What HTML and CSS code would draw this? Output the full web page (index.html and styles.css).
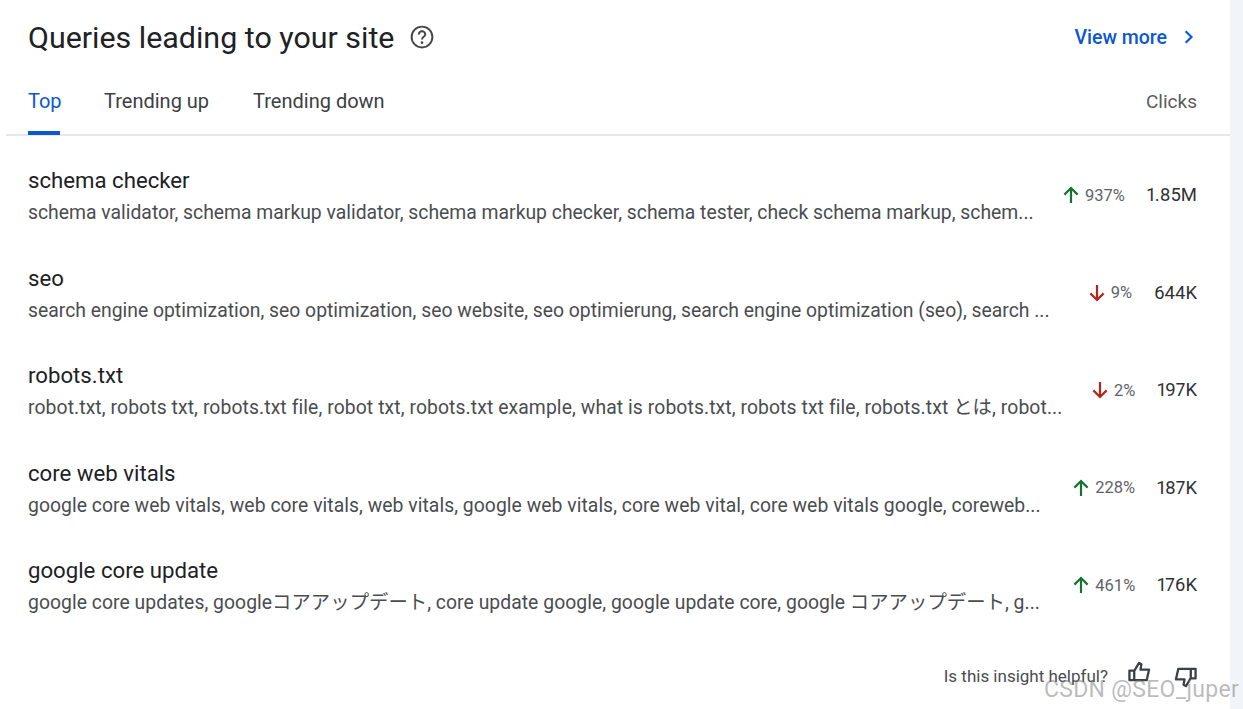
FILE: index.html
```html
<!DOCTYPE html>
<html lang="en">
<head>
  <meta charset="UTF-8" />
  <meta name="viewport" content="width=device-width, initial-scale=1.0"/>
  <title>Queries leading to your site</title>
  <link rel="stylesheet" href="styles.css">
</head>
<body>

<div class="card">
  <div class="card-head">
    <h1>Queries leading to your site</h1>
    <svg class="help" viewBox="0 0 24 24"><circle cx="12" cy="12" r="9.6"/><path d="M9 9.6a3 3 0 0 1 6 0c0 2.100-3 2.400-3 4.600"/><circle class="dot" cx="12" cy="17.200" r="1.200"/></svg>
    <a class="more" href="#">View more
      <svg viewBox="0 0 24 24"><path d="M10.400 5 17.400 12l-7 7"/></svg>
    </a>
  </div>

  <div class="tabs">
    <div class="tab active">Top</div>
    <div class="tab">Trending up</div>
    <div class="tab">Trending down</div>
    <div class="tabs-label">Clicks</div>
  </div>

  <ul class="rows">
    <li class="row">
      <div class="query">
        <div class="name">schema checker</div>
        <div class="related">schema validator, schema markup validator, schema markup checker, schema tester, check schema markup, schem...</div>
      </div>
      <div class="trend"><svg class="up" viewBox="0 0 18 18"><path d="M9 17V2M2.400 8.600 9 2l6.600 6.600"/></svg>937%</div>
      <div class="clicks">1.85M</div>
    </li>
    <li class="row">
      <div class="query">
        <div class="name">seo</div>
        <div class="related">search engine optimization, seo optimization, seo website, seo optimierung, search engine optimization (seo), search ...</div>
      </div>
      <div class="trend"><svg class="down" viewBox="0 0 18 18"><path d="M9 1v15M2.400 9.400 9 16l6.600-6.600"/></svg>9%</div>
      <div class="clicks">644K</div>
    </li>
    <li class="row">
      <div class="query">
        <div class="name">robots.txt</div>
        <div class="related">robot.txt, robots txt, robots.txt file, robot txt, robots.txt example, what is robots.txt, robots txt file, robots.txt とは, robot...</div>
      </div>
      <div class="trend"><svg class="down" viewBox="0 0 18 18"><path d="M9 1v15M2.400 9.400 9 16l6.600-6.600"/></svg>2%</div>
      <div class="clicks">197K</div>
    </li>
    <li class="row">
      <div class="query">
        <div class="name">core web vitals</div>
        <div class="related">google core web vitals, web core vitals, web vitals, google web vitals, core web vital, core web vitals google, coreweb...</div>
      </div>
      <div class="trend"><svg class="up" viewBox="0 0 18 18"><path d="M9 17V2M2.400 8.600 9 2l6.600 6.600"/></svg>228%</div>
      <div class="clicks">187K</div>
    </li>
    <li class="row">
      <div class="query">
        <div class="name">google core update</div>
        <div class="related">google core updates, googleコアアップデート, core update google, google update core, google コアアップデート, g...</div>
      </div>
      <div class="trend"><svg class="up" viewBox="0 0 18 18"><path d="M9 17V2M2.400 8.600 9 2l6.600 6.600"/></svg>461%</div>
      <div class="clicks">176K</div>
    </li>
  </ul>

  <div class="feedback">
    <span>Is this insight helpful?</span>
    <div class="thumbs">
      <svg class="thumb-up" viewBox="0 0 24 24"><path d="M1.500 10.500h5v10h-5zM6.500 11l5-8.500 2.500 1.500-1 5.500h9l-2.500 11h-13z"/></svg>
      <svg class="thumb-down" viewBox="0 0 24 24"><path d="M22.500 13.500h-5v-10h5zM17.500 13l-5 8.500-2.500-1.500 1-5.500h-9l2.500-11h13z"/></svg>
    </div>
  </div>
</div>

<div class="watermark">CSDN @SEO_juper</div>

</body>
</html>
```

FILE: styles.css
```css
body {
  margin: 0;
  height: 709px;
  overflow: hidden;
  background: #f1f4f9;
  font-family: 'Roboto', 'Noto Sans CJK JP', sans-serif;
  color: #3c4043;
}

.card {
  width: 1230px;
  height: 709px;
  background: #fff;
}

.card-head {
  display: flex;
  align-items: center;
  height: 74px;
  padding: 0 33px 0 28px;
}

h1 {
  margin: 0;
  font-size: 30.4px;
  font-weight: 400;
  color: #202124;
}

.help {
  width: 26px;
  height: 26px;
  margin-left: 15px;
  fill: none;
  stroke: #444746;
  stroke-width: 1.8;
}

.help .dot {
  fill: #444746;
  stroke: none;
}

.more {
  display: flex;
  align-items: center;
  gap: 10px;
  margin-left: auto;
  font-size: 19.5px;
  font-weight: 500;
  color: #0b57d0;
  text-decoration: none;
}

.more svg {
  width: 20px;
  height: 20px;
  fill: none;
  stroke: #0b57d0;
  stroke-width: 2.6;
}

.tabs {
  display: flex;
  gap: 44px;
  height: 62px;
  margin-left: 6px;
  padding: 0 33px 0 22px;
  border-bottom: 2px solid #e6e8ea;
  box-sizing: border-box;
  font-size: 20px;
  line-height: 55px;
}

.tab {
  height: 61px;
  color: #3c4043;
  box-sizing: border-box;
}

.tab.active {
  width: 32px;
  color: #0b57d0;
  border-bottom: 4px solid #0b57d0;
  border-radius: 4px 4px 0 0;
}

.tabs-label {
  margin-left: auto;
  font-size: 19px;
  color: #5a5d60;
}

.rows {
  list-style-type: none;
  margin: 0;
  padding: 11.4px 0 0;
}

.row {
  display: flex;
  align-items: center;
  height: 97.5px;
  padding: 0 33px 0 28px;
}

.query {
  flex: 1;
  min-width: 0;
}

.name {
  font-size: 22.2px;
  line-height: 28px;
  color: #202124;
}

.related {
  margin-top: 6px;
  font-size: 19.35px;
  line-height: 26px;
  white-space: nowrap;
  color: #4a4d50;
}

.row:nth-child(3) .related {
  letter-spacing: 0.09px;
}

.row:nth-child(4) .related,
.row:nth-child(5) .related {
  letter-spacing: 0.04px;
}

.trend {
  display: flex;
  align-items: center;
  gap: 5px;
  margin-bottom: 2px;
  font-size: 16.5px;
  color: #5f6368;
}

.trend svg {
  width: 18px;
  height: 18px;
  fill: none;
  stroke-width: 2.2;
}

.up {
  stroke: #137333;
}

.down {
  stroke: #b3261e;
}

.clicks {
  margin-left: 22px;
  margin-bottom: 2px;
  font-size: 18.5px;
  font-variant-numeric: proportional-nums;
  color: #303336;
}

.feedback {
  display: flex;
  align-items: center;
  justify-content: flex-end;
  gap: 20px;
  margin-top: 28.6px;
  padding-right: 33px;
  font-size: 17px;
  color: #4a4d50;
}

.thumbs {
  display: flex;
  gap: 23px;
}

.feedback svg {
  width: 23px;
  height: 24px;
  fill: none;
  stroke: #3c4043;
  stroke-width: 2.4;
  stroke-linejoin: round;
}

.thumb-up {
  margin-top: -3px;
}

.thumb-down {
  margin-top: 2px;
}

.watermark {
  position: absolute;
  left: 1044px;
  top: 676px;
  font-size: 23px;
  letter-spacing: 0.3px;
  color: rgba(120, 120, 120, 0.5);
}
```
